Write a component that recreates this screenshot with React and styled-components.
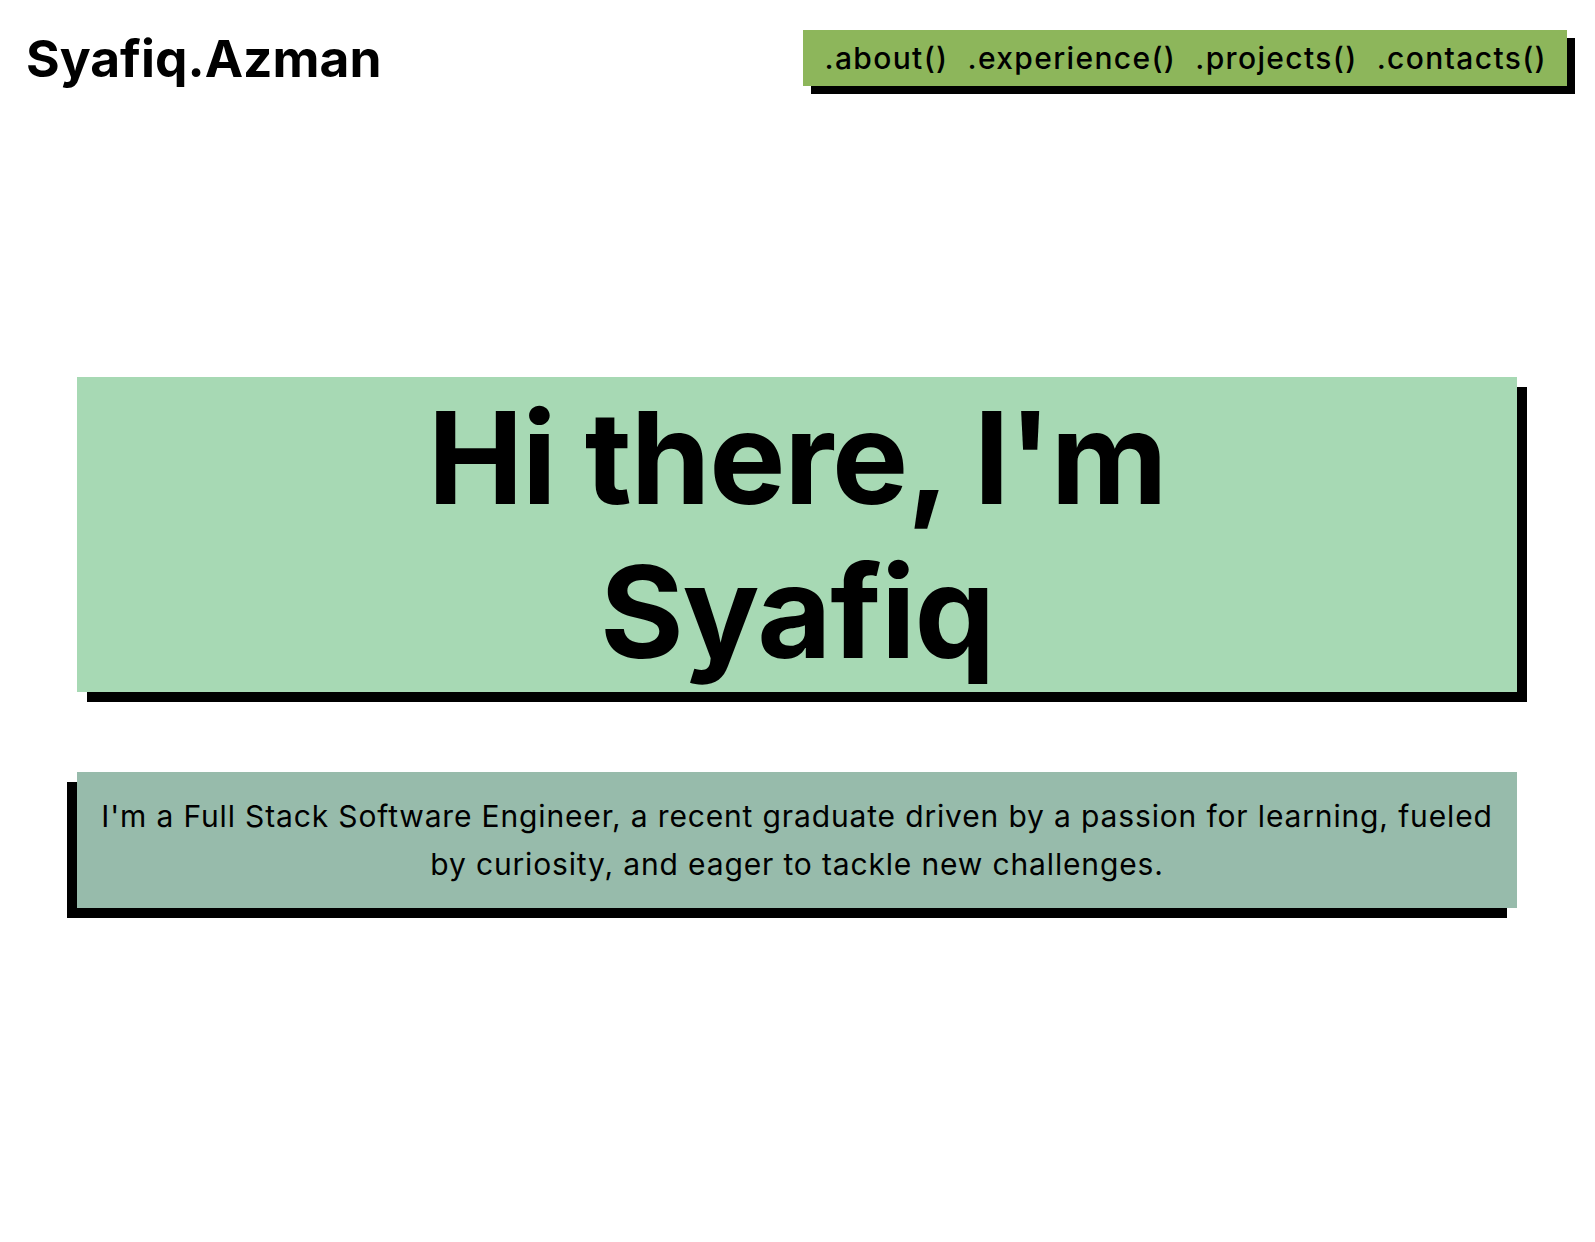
import React from "react";
import styled, { createGlobalStyle } from "styled-components";

const GlobalStyle = createGlobalStyle`
  html, body {
    margin: 0;
    padding: 0;
    background: #ffffff;
  }
  body {
    font-family: Inter, "Noto Sans", sans-serif;
    color: #000;
  }
  * { box-sizing: border-box; }
`;

const Page = styled.div`
  min-height: 1242px;
  background: #fff;
`;

const Header = styled.header`
  display: flex;
  justify-content: space-between;
  align-items: center;
  padding: 29px 28px 0 26px;
`;

const Logo = styled.div`
  font-family: Inter, sans-serif;
  font-size: 51.5px;
  font-weight: 700;
  line-height: 58px;
`;

const Nav = styled.nav`
  display: flex;
  align-items: center;
  gap: 19px;
  height: 56px;
  padding: 0 20px 0 22px;
  background: #8db65b;
  box-shadow: 8px 8px 0 #000;
`;

const NavLink = styled.a`
  font-family: Inter, sans-serif;
  font-size: 30px;
  font-weight: 500;
  letter-spacing: 1.35px;
  color: #000;
  text-decoration: none;
  cursor: pointer;
`;

const Main = styled.main`
  display: flex;
  flex-direction: column;
  gap: 80px;
  padding: 290px 78px 0 77px;
`;

const HeroCard = styled.section`
  background: #a7d9b4;
  box-shadow: 10px 10px 0 #000;
  padding: 4px 0 3px;
  text-align: center;
`;

const HeroTitle = styled.h1`
  margin: 0;
  font-family: Inter, sans-serif;
  font-size: 128px;
  font-weight: 700;
  line-height: 154px;
  letter-spacing: -1.2px;
`;

const AboutCard = styled.section`
  background: #97bbab;
  box-shadow: -10px 10px 0 #000;
  padding: 20px 14px;
  text-align: center;
`;

const AboutText = styled.p`
  margin: 0;
  font-family: Inter, sans-serif;
  font-size: 30px;
  font-weight: 400;
  line-height: 48px;
  letter-spacing: 0.85px;
`;

export default function App() {
  const links = [".about()", ".experience()", ".projects()", ".contacts()"];
  return (
    <Page>
      <GlobalStyle />
      <Header>
        <Logo>Syafiq.Azman</Logo>
        <Nav>
          {links.map((l) => (
            <NavLink key={l}>{l}</NavLink>
          ))}
        </Nav>
      </Header>
      <Main>
        <HeroCard>
          <HeroTitle>
            Hi there, I'm
            <br />
            Syafiq
          </HeroTitle>
        </HeroCard>
        <AboutCard>
          <AboutText>
            I'm a Full Stack Software Engineer, a recent graduate driven by a
            passion for learning, fueled by curiosity, and eager to tackle new
            challenges.
          </AboutText>
        </AboutCard>
      </Main>
    </Page>
  );
}
